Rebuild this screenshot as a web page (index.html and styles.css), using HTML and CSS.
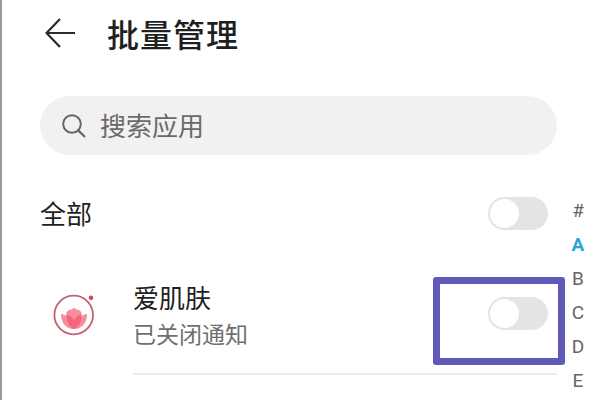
FILE: index.html
```html
<!DOCTYPE html>
<html lang="zh">
<head>
    <meta charset="utf-8">
    <title>批量管理</title>
    <link rel="stylesheet" href="styles.css">
</head>
<body>
<div class="page">

    <div class="header">
        <svg class="back" width="30" height="30" viewBox="0 0 30 30">
            <path d="M15 1 L1.5 15 L15 29 M1.5 15 H30" fill="none" stroke="#2b2b2b" stroke-width="2.2"/>
        </svg>
        <h1>批量管理</h1>
    </div>

    <div class="search">
        <svg class="search-icon" width="24" height="24" viewBox="0 0 24 24">
            <circle cx="10" cy="10" r="8.8" fill="none" stroke="#666" stroke-width="2"/>
            <path d="M16.2 16.4 L23 23" fill="none" stroke="#666" stroke-width="2.2"/>
        </svg>
        <span class="search-text">搜索应用</span>
    </div>

    <div class="all-row">
        <span class="all-label">全部</span>
        <span class="toggle"><span class="knob"></span></span>
    </div>

    <div class="app-row">
        <svg class="app-icon" width="46" height="46" viewBox="0 0 46 46">
            <circle cx="21.7" cy="25" r="19.3" fill="none" stroke="#c4606f" stroke-width="1.8"/>
            <circle cx="39" cy="7.7" r="2.3" fill="#cf4a5e"/>
            <path d="M22 39 C13 39 9 32 9 24 C11 24 13 25 14 26 C14 23 15 21 17 20 C19 20 21 19 22 17.5 C23 19 25 20 27 20 C29 21 30 23 30 26 C31 25 33 24 35 24 C35 32 31 39 22 39 Z" fill="#f98d99"/>
            <path d="M22 39 C16 36 14 30 15 25 C18 25 20 27 22 30 C24 27 26 25 29 25 C30 30 28 36 22 39 Z" fill="#f6657a"/>
        </svg>
        <div class="app-body">
            <div class="app-text">
                <div class="app-name">爱肌肤</div>
                <div class="app-status">已关闭通知</div>
            </div>
            <span class="toggle"><span class="knob"></span></span>
        </div>
    </div>

    <div class="highlight"></div>

    <ul class="index">
        <li>#</li>
        <li class="current">A</li>
        <li>B</li>
        <li>C</li>
        <li>D</li>
        <li>E</li>
    </ul>

</div>
</body>
</html>
```

FILE: styles.css
```css
html, body {
    margin: 0;
    padding: 0;
    background: #fff;
}

.page {
    position: relative;
    box-sizing: border-box;
    width: 597px;
    height: 400px;
    overflow: hidden;
    padding: 0 40px 0 38px;
    border-left: 2px solid #9a9a9a;
    font-family: "Noto Sans CJK SC", "Liberation Sans", sans-serif;
    color: #1f1f1f;
}

.header {
    display: flex;
    align-items: center;
    height: 66px;
}

.back {
    margin-left: 5px;
}

.header h1 {
    margin: 0 0 0 32px;
    font-size: 32px;
    line-height: 40px;
    font-weight: 500;
    letter-spacing: 1px;
}

.search {
    display: flex;
    align-items: center;
    height: 59px;
    margin-top: 30px;
    padding-left: 22px;
    border-radius: 30px;
    background: #f1f1f1;
    color: #6a6a6a;
    font-size: 26px;
}

.search-icon {
    margin-right: 14px;
}

.search-text {
    margin-bottom: 2px;
}

.all-row {
    display: flex;
    align-items: center;
    justify-content: space-between;
    height: 64px;
    margin-top: 26px;
    padding-right: 9px;
    font-size: 26px;
}

.all-label {
    margin-bottom: 2px;
}

.toggle {
    display: block;
    box-sizing: border-box;
    width: 60px;
    height: 33px;
    padding: 2px;
    border-radius: 17px;
    background: #e4e4e4;
}

.knob {
    display: block;
    box-sizing: border-box;
    width: 29px;
    height: 29px;
    border-radius: 50%;
    background: #fff;
}

.app-row {
    display: flex;
    margin-top: 9px;
}

.app-icon {
    margin: 36px 0 0 12px;
    flex: none;
}

.app-body {
    display: flex;
    align-items: center;
    justify-content: space-between;
    flex: 1;
    height: 119px;
    margin-left: 35px;
    padding-right: 9px;
    border-bottom: 2px solid #ebebeb;
}

.app-text {
    margin-top: 2px;
}

.app-name {
    font-size: 26px;
    line-height: 37px;
}

.app-status {
    font-size: 23px;
    line-height: 36px;
    color: #6f6f6f;
}

.highlight {
    position: absolute;
    left: 431px;
    top: 277px;
    box-sizing: border-box;
    width: 132px;
    height: 88px;
    border: 7px solid #5f59b8;
    border-radius: 3px;
}

.index {
    position: absolute;
    left: 566px;
    top: 194px;
    width: 20px;
    margin: 0;
    padding: 0;
    list-style: none;
    text-align: center;
    font-family: "Roboto", "Liberation Sans", sans-serif;
    font-size: 19px;
    line-height: 33.9px;
    color: #666;
}

.index .current {
    color: #2aa5dc;
    font-weight: 700;
}
```
